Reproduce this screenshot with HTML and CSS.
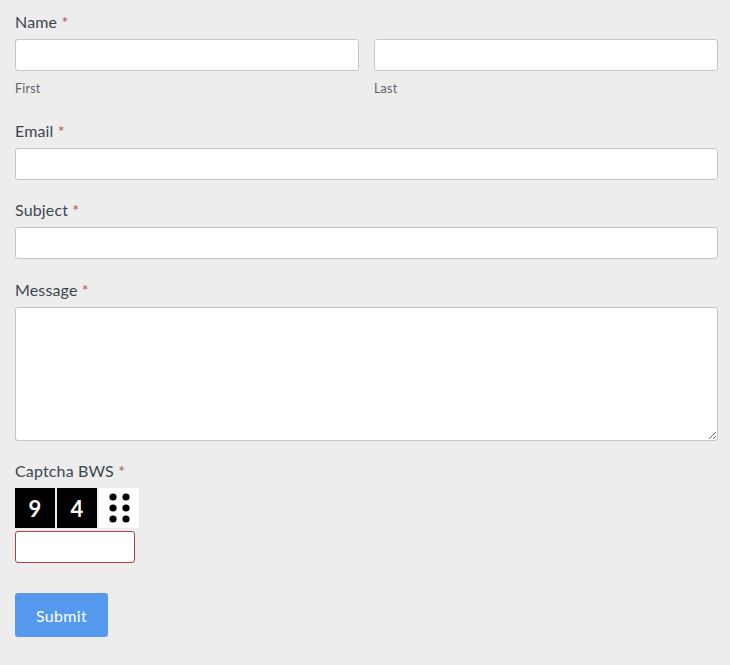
FILE: index.html
```html
<!DOCTYPE html>
<html>
<head>
<meta charset="utf-8">
<link rel="stylesheet" href="styles.css">
</head>
<body>
<form class="form">
  <div class="field field-name">
    <div class="label">Name <span class="req">*</span></div>
    <div class="row">
      <div class="col">
        <input class="input" type="text">
        <div class="sublabel">First</div>
      </div>
      <div class="col">
        <input class="input" type="text">
        <div class="sublabel">Last</div>
      </div>
    </div>
  </div>
  <div class="field">
    <div class="label">Email <span class="req">*</span></div>
    <input class="input" type="email">
  </div>
  <div class="field field-subject">
    <div class="label">Subject <span class="req">*</span></div>
    <input class="input" type="text">
  </div>
  <div class="field">
    <div class="label">Message <span class="req">*</span></div>
    <textarea class="input textarea"></textarea>
  </div>
  <div class="field">
    <div class="label">Captcha BWS <span class="req">*</span></div>
    <div class="captcha">
      <div class="cap-tile dark">9</div>
      <div class="cap-tile dark">4</div>
      <div class="cap-tile light">
        <svg width="40" height="40" viewBox="0 0 40 40">
          <circle cx="14" cy="9" r="3.6" fill="#000"/>
          <circle cx="27" cy="9" r="3.6" fill="#000"/>
          <circle cx="14" cy="20" r="3.6" fill="#000"/>
          <circle cx="27" cy="20" r="3.6" fill="#000"/>
          <circle cx="14" cy="31" r="3.6" fill="#000"/>
          <circle cx="27" cy="31" r="3.6" fill="#000"/>
        </svg>
      </div>
    </div>
    <input class="input cap-input" type="text">
  </div>
  <button class="submit" type="button">Submit</button>
</form>
</body>
</html>
```
FILE: styles.css
```css
html, body {
  margin: 0;
  padding: 0;
  background: #ededed;
}
body {
  font-family: Lato, "Open Sans", "Liberation Sans", sans-serif;
  color: #3f4550;
}
.form {
  width: 703px;
  padding: 12px 0 0 15px;
}
.field {
  margin-bottom: 20px;
}
.field-name {
  margin-bottom: 25px;
}
.field-subject {
  margin-bottom: 21px;
}
.label {
  font-size: 16px;
  letter-spacing: 0.15px;
  line-height: 20px;
  margin-bottom: 7px;
}
.req {
  color: #b94a48;
}
.row {
  display: flex;
  gap: 15px;
}
.col {
  flex: 1;
  min-width: 0;
}
.input {
  display: block;
  box-sizing: border-box;
  width: 100%;
  height: 32px;
  margin: 0;
  border: 1px solid #c6c6c6;
  border-radius: 3px;
  background: #fff;
  font-family: inherit;
  font-size: 14px;
  padding: 4px 8px;
}
.textarea {
  height: 134px;
  resize: vertical;
}
.sublabel {
  font-size: 12.5px;
  letter-spacing: 0.2px;
  line-height: 14px;
  margin-top: 11px;
  color: #5f646b;
}
.captcha {
  display: flex;
  gap: 2px;
}
.cap-tile {
  width: 40px;
  height: 40px;
  display: flex;
  align-items: center;
  justify-content: center;
  font-size: 22px;
  font-weight: bold;
}
.cap-tile.dark {
  background: #000;
  color: #fff;
}
.cap-tile.light {
  background: #fff;
}
.cap-input {
  width: 120px;
  margin-top: 3px;
  border-color: #a94442;
}
.submit {
  display: block;
  margin-top: 30px;
  width: 93px;
  height: 44px;
  border: none;
  border-radius: 3px;
  background: #5599ef;
  color: #fff;
  font-family: inherit;
  font-size: 16px;
  letter-spacing: 0.3px;
}
```
